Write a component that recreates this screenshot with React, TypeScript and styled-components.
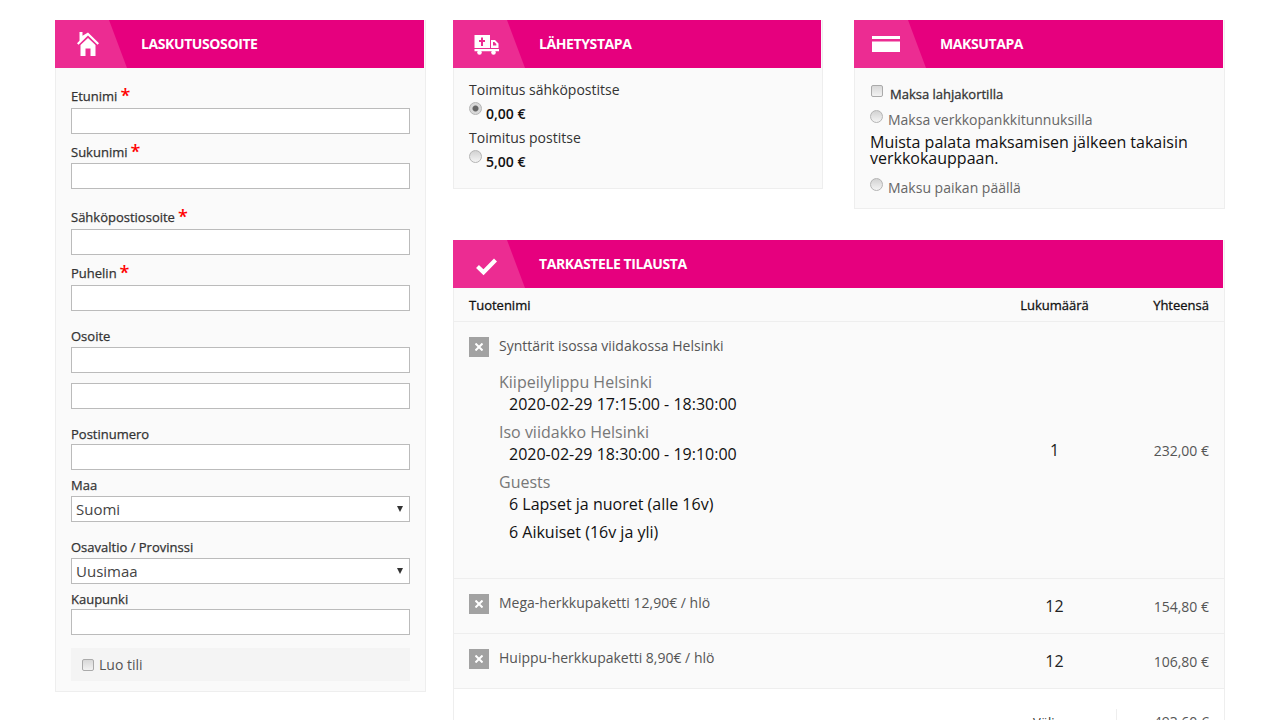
import React from 'react';
import styled, { createGlobalStyle } from 'styled-components';

const Global = createGlobalStyle`
  html, body { margin: 0; padding: 0; background: #fff; overflow: hidden; height: 720px; }
  body { font-family: "Open Sans", "Liberation Sans", sans-serif; color: #222; }
  * { box-sizing: border-box; }
`;

const Page = styled.div`
  display: grid;
  grid-template-columns: 371px 772px;
  column-gap: 27px;
  padding: 20px 0 0 55px;
  align-items: start;
`;
const RightColumn = styled.div`
  display: flex;
  flex-direction: column;
  gap: 31px;
`;
const TopRow = styled.div`
  display: flex;
  align-items: flex-start;
  gap: 31px;
`;
const Panel = styled.section<{ $w?: number }>`
  width: ${p => (p.$w ? `${p.$w}px` : '100%')};
  background: #fafafa;
  border: 1px solid #eee;
  border-top: 0;
`;
const Header = styled.header`
  display: flex;
  align-items: center;
  height: 48px;
  margin: 0 1px 0 -1px;
  background: #e6007e;
`;
const IconTab = styled.div<{ $pr?: number }>`
  display: flex;
  align-items: center;
  justify-content: center;
  width: 72px;
  height: 48px;
  padding-right: ${p => p.$pr ?? 6}px;
  margin-right: 14px;
  background: #ec2c92;
  clip-path: polygon(0 0, 54px 0, 72px 100%, 0 100%);
`;
const Title = styled.h2`
  margin: 0;
  font-size: 14px;
  line-height: 48px;
  font-weight: 700;
  letter-spacing: -0.4px;
  color: #fff;
`;
const Form = styled.div`
  display: flex;
  flex-direction: column;
  padding: 18px 15px 10px;
`;
const Field = styled.div<{ $mt?: number }>`
  display: flex;
  flex-direction: column;
  margin-top: ${p => p.$mt ?? 0}px;
`;
const Label = styled.label<{ $nudge?: number }>`
  display: block;
  height: 22px;
  padding-top: ${p => p.$nudge ?? 0}px;
  font-size: 13px;
  line-height: 20px;
  font-weight: 400;
  -webkit-text-stroke: 0.25px #333;
  color: #333;
  white-space: nowrap;
`;
const Star = styled.span`
  margin-left: 3px;
  color: #f00;
  -webkit-text-stroke: 0;
  font-size: 18px;
  line-height: 14px;
  font-weight: 600;
  vertical-align: -1px;
`;
const TextInput = styled.input`
  display: block;
  width: 339px;
  height: 26px;
  border: 1px solid #bbb;
  background: #fff;
  border-radius: 0;
  outline: 0;
  padding: 0 4px;
`;
const SelectWrap = styled.div`
  position: relative;
  width: 339px;
  height: 26px;
  &::after {
    content: '';
    position: absolute;
    right: 7px;
    top: 10px;
    border-left: 3px solid transparent;
    border-right: 3px solid transparent;
    border-top: 6px solid #333;
  }
`;
const Select = styled.select`
  appearance: none;
  display: block;
  width: 100%;
  height: 26px;
  border: 1px solid #bbb;
  border-radius: 0;
  background: #fff;
  padding: 0 4px;
  font: 400 15px/24px "Open Sans", sans-serif;
  color: #444;
  outline: 0;
`;
const CreateAccount = styled.label`
  display: flex;
  align-items: center;
  gap: 5px;
  height: 33px;
  margin-top: 13px;
  padding-left: 11px;
  background: #f4f4f4;
  font-size: 14px;
  color: #555;
`;
const Check = styled.input`
  appearance: none;
  flex: none;
  width: 12px;
  height: 12px;
  margin: 0;
  border: 1px solid #aaa;
  border-radius: 2px;
  background: linear-gradient(#d8d8d8, #f2f2f2);
`;
const Radio = styled.input`
  appearance: none;
  flex: none;
  width: 13px;
  height: 13px;
  margin: 0;
  border: 1px solid #b4b4b4;
  border-radius: 50%;
  background: linear-gradient(#d2d2d2, #f4f4f4);
  &:checked {
    background: radial-gradient(circle, #666 0 2.5px, #d8d8d8 3.5px);
  }
`;
const ShipBody = styled.div`
  height: 120px;
  padding: 12px 15px 0;
`;
const ShipName = styled.div`
  font-size: 14px;
  line-height: 20px;
  color: #333;
`;
const PriceRow = styled.div`
  display: flex;
  align-items: flex-start;
  gap: 4px;
  height: 28px;
  padding-top: 2px;
`;
const Price = styled.strong`
  margin-top: 2px;
  font-size: 14px;
  line-height: 20px;
  font-weight: 600;
  color: #111;
`;
const PayBody = styled.div`
  padding: 15px 15px 0;
  height: 140px;
`;
const PayRow = styled.label<{ $bold?: boolean; $h?: number }>`
  display: flex;
  align-items: flex-start;
  gap: ${p => (p.$bold ? 7 : 5)}px;
  height: ${p => p.$h ?? 22}px;
  padding-left: ${p => (p.$bold ? 1 : 0)}px;
  font-size: ${p => (p.$bold ? 13 : 14)}px;
  line-height: 20px;
  color: ${p => (p.$bold ? '#333' : '#666')};
  ${p => (p.$bold ? '-webkit-text-stroke: 0.3px #333;' : '')}
  span { margin-top: ${p => (p.$bold ? 1 : 2)}px; }
  input { margin-top: 2px; }
`;
const PayNote = styled.p`
  margin: 2px 0 10px;
  font-size: 16px;
  line-height: 16px;
  color: #111;
`;
const GridRow = styled.div<{ $h: number }>`
  display: grid;
  grid-template-columns: 1fr 69px 120px;
  height: ${p => p.$h}px;
  padding: 0 15px;
  border-bottom: 1px solid #eee;
`;
const Th = styled.div<{ $align?: string }>`
  font-size: 13px;
  line-height: 35px;
  font-weight: 400;
  -webkit-text-stroke: 0.3px #111;
  color: #111;
  text-align: ${p => p.$align ?? 'left'};
`;
const ProductCell = styled.div`
  display: flex;
  gap: 10px;
  padding-top: 15px;
`;
const RemoveButton = styled.span`
  flex: none;
  display: flex;
  align-items: center;
  justify-content: center;
  width: 20px;
  height: 20px;
  background: #a2a2a2;
`;
const ProductInfo = styled.div``;
const ProductName = styled.div`
  font-size: 14px;
  line-height: 18px;
  color: #555;
`;
const SubName = styled.div<{ $mt: number }>`
  margin-top: ${p => p.$mt}px;
  font-size: 16px;
  line-height: 22px;
  color: #777;
`;
const Detail = styled.div<{ $h?: number }>`
  padding-left: 10px;
  font-size: 16px;
  line-height: 22px;
  height: ${p => p.$h ?? 22}px;
  color: #111;
`;
const Qty = styled.div`
  display: flex;
  align-items: center;
  justify-content: center;
  font-size: 16px;
  color: #222;
`;
const Total = styled.div`
  display: flex;
  align-items: center;
  justify-content: flex-end;
  font-size: 14px;
  color: #555;
`;
const Summary = styled.div`
  display: grid;
  grid-template-columns: 1fr 93px;
  height: 60px;
  padding: 20px 15px 0 0;
  background: #fff;
`;
const SummaryLabel = styled.div`
  padding: 3px 16px 0 0;
  text-align: right;
  font-size: 13px;
  line-height: 20px;
  color: #333;
`;
const SummaryValue = styled.div`
  padding-top: 3px;
  border-left: 1px solid #eee;
  text-align: right;
  font-size: 14px;
  line-height: 20px;
  color: #555;
`;

const HomeIcon = () => (
  <svg width="22" height="24" viewBox="0 0 22 24" fill="#fff">
    <path d="M2.500 0h3v3.800L11 .5l11 10.800-1.500 1.500L11 3.500 1.500 12.800 0 11.300l2.500-2.500z" />
    <path fillRule="evenodd" d="M11 6l7.500 7v11h-15V13zM8.500 16.500V24h5v-7.500z" />
  </svg>
);
const TruckIcon = () => (
  <svg width="25" height="22" viewBox="0 0 25 22" fill="#fff">
    <path fillRule="evenodd" d="M.5 2H16v13H.500zM7 4.500v2.500H5v2h2v4h2V9h2V7H9V4.500z" />
    <path fillRule="evenodd" d="M17 7h4l3.500 3.500V15H17zM19 9v3.500h3.300V11L20.300 9z" />
    <path d="M.5 16H25v2.200H.500z" />
    <circle cx="5.500" cy="19.500" r="2.300" />
    <circle cx="19.500" cy="19.500" r="2.300" />
  </svg>
);
const CardIcon = () => (
  <svg width="28" height="16" viewBox="0 0 28 16">
    <rect width="28" height="16" fill="#fff" />
    <rect y="3" width="28" height="2.500" fill="#ec2c92" />
  </svg>
);
const CheckIcon = () => (
  <svg width="24" height="24" viewBox="0 0 24 24" fill="none" stroke="#fff" strokeWidth="4.200">
    <path d="M3.500 14.500l6 5.700L21.500 8" />
  </svg>
);
const CloseIcon = () => (
  <svg width="8" height="8" viewBox="0 0 8 8" stroke="#fff" strokeWidth="2">
    <path d="M.5.500l7 7M7.500.500l-7 7" />
  </svg>
);

const PanelHead = ({ icon, title, pr }: { icon: React.ReactNode; title: string; pr?: number }) => (
  <Header>
    <IconTab $pr={pr}>{icon}</IconTab>
    <Title>{title}</Title>
  </Header>
);

const InputField = ({ label, req, mt, nudge }: { label: string; req?: boolean; mt?: number; nudge?: number }) => (
  <Field $mt={mt}>
    <Label $nudge={nudge}>
      {label}
      {req && <Star>*</Star>}
    </Label>
    <TextInput />
  </Field>
);

export default function App() {
  return (
    <>
      <Global />
      <Page>
        <Panel>
          <PanelHead icon={<HomeIcon />} title="LASKUTUSOSOITE" />
          <Form>
            <InputField label="Etunimi" req />
            <InputField label="Sukunimi" req mt={7} nudge={1} />
            <InputField label="Sähköpostiosoite" req mt={18} />
            <InputField label="Puhelin" req mt={8} />
            <InputField label="Osoite" mt={14} nudge={1} />
            <Field $mt={10}><TextInput /></Field>
            <InputField label="Postinumero" mt={13} nudge={2} />
            <Field $mt={4}>
              <Label $nudge={1}>Maa</Label>
              <SelectWrap>
                <Select defaultValue="Suomi"><option>Suomi</option></Select>
              </SelectWrap>
            </Field>
            <Field $mt={14}>
              <Label $nudge={1}>Osavaltio / Provinssi</Label>
              <SelectWrap>
                <Select defaultValue="Uusimaa"><option>Uusimaa</option></Select>
              </SelectWrap>
            </Field>
            <InputField label="Kaupunki" mt={3} nudge={2} />
            <CreateAccount><Check type="checkbox" readOnly />Luo tili</CreateAccount>
          </Form>
        </Panel>
        <RightColumn>
          <TopRow>
            <Panel $w={370}>
              <PanelHead icon={<TruckIcon />} title="LÄHETYSTAPA" />
              <ShipBody>
                <ShipName>Toimitus sähköpostitse</ShipName>
                <PriceRow><Radio type="radio" name="ship" defaultChecked /><Price>0,00 €</Price></PriceRow>
                <ShipName>Toimitus postitse</ShipName>
                <PriceRow><Radio type="radio" name="ship" /><Price>5,00 €</Price></PriceRow>
              </ShipBody>
            </Panel>
            <Panel $w={371}>
              <PanelHead icon={<CardIcon />} pr={8} title="MAKSUTAPA" />
              <PayBody>
                <PayRow $bold $h={25}><Check type="checkbox" readOnly /><span>Maksa lahjakortilla</span></PayRow>
                <PayRow $h={24}><Radio type="radio" name="pay" /><span>Maksa verkkopankkitunnuksilla</span></PayRow>
                <PayNote>Muista palata maksamisen jälkeen takaisin verkkokauppaan.</PayNote>
                <PayRow><Radio type="radio" name="pay" /><span>Maksu paikan päällä</span></PayRow>
              </PayBody>
            </Panel>
          </TopRow>
          <Panel>
            <PanelHead icon={<CheckIcon />} title="TARKASTELE TILAUSTA" />
            <GridRow $h={34}>
              <Th>Tuotenimi</Th>
              <Th $align="center">Lukumäärä</Th>
              <Th $align="right">Yhteensä</Th>
            </GridRow>
            <GridRow $h={257}>
              <ProductCell>
                <RemoveButton><CloseIcon /></RemoveButton>
                <ProductInfo>
                  <ProductName>Synttärit isossa viidakossa Helsinki</ProductName>
                  <SubName $mt={16}>Kiipeilylippu Helsinki</SubName>
                  <Detail>2020-02-29 17:15:00 - 18:30:00</Detail>
                  <SubName $mt={6}>Iso viidakko Helsinki</SubName>
                  <Detail>2020-02-29 18:30:00 - 19:10:00</Detail>
                  <SubName $mt={6}>Guests</SubName>
                  <Detail $h={28}>6 Lapset ja nuoret (alle 16v)</Detail>
                  <Detail>6 Aikuiset (16v ja yli)</Detail>
                </ProductInfo>
              </ProductCell>
              <Qty>1</Qty>
              <Total>232,00 €</Total>
            </GridRow>
            <GridRow $h={55}>
              <ProductCell>
                <RemoveButton><CloseIcon /></RemoveButton>
                <ProductName>Mega-herkkupaketti 12,90€ / hlö</ProductName>
              </ProductCell>
              <Qty>12</Qty>
              <Total>154,80 €</Total>
            </GridRow>
            <GridRow $h={55}>
              <ProductCell>
                <RemoveButton><CloseIcon /></RemoveButton>
                <ProductName>Huippu-herkkupaketti 8,90€ / hlö</ProductName>
              </ProductCell>
              <Qty>12</Qty>
              <Total>106,80 €</Total>
            </GridRow>
            <Summary>
              <SummaryLabel>Välisumma</SummaryLabel>
              <SummaryValue>493,60 €</SummaryValue>
            </Summary>
          </Panel>
        </RightColumn>
      </Page>
    </>
  );
}
